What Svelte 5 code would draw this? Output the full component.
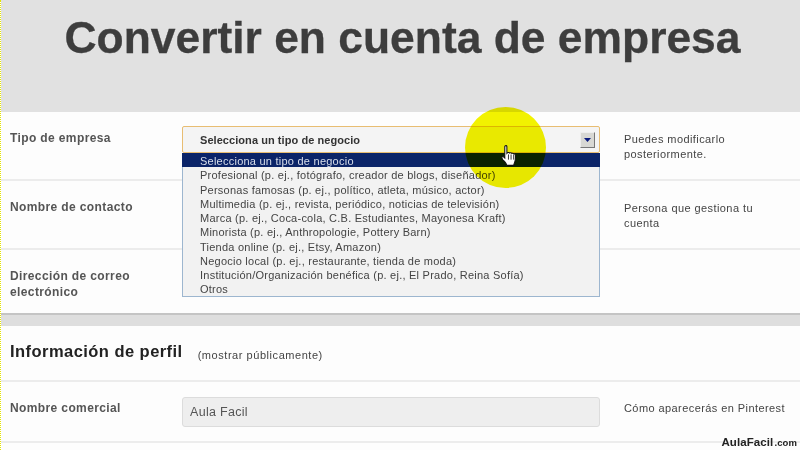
<script>
  const options = [
    'Selecciona un tipo de negocio',
    'Profesional (p. ej., fotógrafo, creador de blogs, diseñador)',
    'Personas famosas (p. ej., político, atleta, músico, actor)',
    'Multimedia (p. ej., revista, periódico, noticias de televisión)',
    'Marca (p. ej., Coca-cola, C.B. Estudiantes, Mayonesa Kraft)',
    'Minorista (p. ej., Anthropologie, Pottery Barn)',
    'Tienda online (p. ej., Etsy, Amazon)',
    'Negocio local (p. ej., restaurante, tienda de moda)',
    'Institución/Organización benéfica (p. ej., El Prado, Reina Sofía)',
    'Otros'
  ];
</script>

<div class="page">
  <header class="hero"><h1>Convertir en cuenta de empresa</h1></header>

  <section class="card first">
    <div class="row r1">
      <div class="label">Tipo de empresa</div>
      <div class="field">
        <div class="select">
          <span>Selecciona un tipo de negocio</span>
          <span class="arrow"><svg width="7" height="4" viewBox="0 0 7 4"><path d="M0 0h7L3.500 4z" fill="#0a1a7e"/></svg></span>
        </div>
        <ul class="list">
          {#each options as o, i}
            <li class:active={i === 0}>{o}</li>
          {/each}
        </ul>
      </div>
      <div class="help">Puedes modificarlo posteriormente.</div>
    </div>
    <div class="row r2">
      <div class="label">Nombre de contacto</div>
      <div class="field"></div>
      <div class="help">Persona que gestiona tu cuenta</div>
    </div>
    <div class="row r3">
      <div class="label">Dirección de correo electrónico</div>
      <div class="field"></div>
      <div class="help"></div>
    </div>
  </section>

  <div class="band"></div>

  <section class="card second">
    <div class="title"><h2>Información de perfil</h2><span>(mostrar públicamente)</span></div>
    <div class="row r4">
      <div class="label">Nombre comercial</div>
      <div class="field"><div class="input">Aula Facil</div></div>
      <div class="help">Cómo aparecerás en Pinterest</div>
    </div>
  </section>

  <div class="spot"></div>
  <svg class="hand" width="17" height="23" viewBox="0 0 16 22">
    <path d="M3.500 1.500c0-1.200 2-1.200 2 0V8l.6-.6c.6-.4 1.600-.3 1.900.3.600-.5 1.700-.4 2 .3.700-.4 1.700-.2 2 .6.600-.3 1.500 0 1.600.8.200 2.400.1 5-.6 7-.4 1.200-.8 2-1 3.100H5.500c-.4-1.600-1.400-2.700-2.500-4C2 14.800 1 13.500.7 12.300c-.2-1 .8-1.600 1.600-1L3.500 12.500z" fill="#fff" stroke="#111" stroke-width="1"/>
    <path d="M7 9v5M9.500 9v5M12 9.500V14" stroke="#111" stroke-width=".8" fill="none"/>
  </svg>
  <div class="mark">AulaFacil<small>.com</small></div>
</div>

<style>
  :global(body) { margin: 0; background: #fff; }
  .page {
    position: relative;
    width: 800px;
    height: 450px;
    overflow: hidden;
    background: #fff;
    font-family: "Liberation Sans", Arial, sans-serif;
    color: #444;
    border-left: 1px dotted #e4e400;
    box-sizing: border-box;
  }
  .hero { height: 112px; box-sizing: border-box; padding-top: 13px; text-align: center; background: #e1e1e1; }
  h1 { margin: 0 0 0 4px; font-size: 44.400px; line-height: 50px; font-weight: 700; color: #3d3d3d; -webkit-text-stroke: .3px #3d3d3d; }
  .card { background: #fdfdfd; }
  .first { height: 201px; }
  .band { height: 13px; background: #dedede; border-top: 2px solid #c4c4c4; box-sizing: border-box; }
  .second { height: 124px; }
  .row { display: grid; grid-template-columns: 181px 418px 1fr; box-sizing: border-box; border-bottom: 2px solid #ececec; }
  .r1, .r2 { height: 69px; }
  .r3 { height: 63px; border-bottom: 0; }
  .r4 { height: 61px; }
  .label { padding: 18px 0 0 9px; font-size: 12px; line-height: 16px; font-weight: 700; letter-spacing: .38px; color: #555; }
  .r3 .label { width: 130px; }
  .field { position: relative; }
  .help { padding: 20px 0 0 24px; max-width: 150px; font-size: 11px; line-height: 14.500px; letter-spacing: .42px; color: #444; }
  .r4 .help { padding-top: 19px; max-width: none; white-space: nowrap; }
  .select {
    margin-top: 14px; height: 27px; box-sizing: border-box;
    border: 1px solid #e8bd72; border-radius: 2px;
    background: #f4f4f4;
    display: flex; align-items: center; justify-content: space-between;
    padding: 1px 4px 0 17px;
    font-size: 11px; font-weight: 700; letter-spacing: .06px; color: #333;
  }
  .arrow {
    width: 15px; height: 16px; display: flex; align-items: center; justify-content: center;
    background: #d8d8d4; border: 1px solid; border-color: #eee #777 #777 #eee; box-sizing: border-box;
  }
  .list {
    position: absolute; left: 0; top: 41px; width: 418px; box-sizing: border-box;
    margin: 0; padding: 0; list-style: none;
    background: #f2f2f2; border: 1px solid #9db6cf; border-top: 0;
    font-size: 11px; letter-spacing: .24px; color: #444;
  }
  .list li { height: 14.250px; line-height: 16px; padding-left: 17px; white-space: nowrap; }
  .list li.active { background: #0b2468; color: #d8deea; margin: 0 -1px 0 -1px; padding-left: 18px; }
  .title { height: 56px; box-sizing: border-box; border-bottom: 2px solid #ececec; display: flex; align-items: flex-start; padding: 14px 0 0 9px; }
  h2 { margin: 0; font-size: 16.500px; line-height: 22px; font-weight: 700; color: #222; letter-spacing: .45px; }
  .title span { margin-left: 15px; padding-top: 8px; font-size: 11px; line-height: 14px; letter-spacing: .55px; color: #444; }
  .input {
    margin-top: 15px; height: 30px; box-sizing: border-box; border: 1px solid #dcdcdc; border-radius: 3px;
    background: #eeeeee; padding: 0 7px; line-height: 29px; font-size: 12.500px; letter-spacing: .3px; color: #555;
  }
  .spot {
    position: absolute; left: 464px; top: 107px; width: 81px; height: 81px; border-radius: 50%;
    background: #f4f400; mix-blend-mode: multiply; filter: blur(.6px);
  }
  .hand { position: absolute; left: 500px; top: 145px; }
  .mark { position: absolute; right: 3px; bottom: 0; font-size: 11.500px; line-height: 14px; font-weight: 700; color: #222; letter-spacing: .1px; }
  .mark small { font-size: 9.500px; margin-left: 1px; }
</style>
